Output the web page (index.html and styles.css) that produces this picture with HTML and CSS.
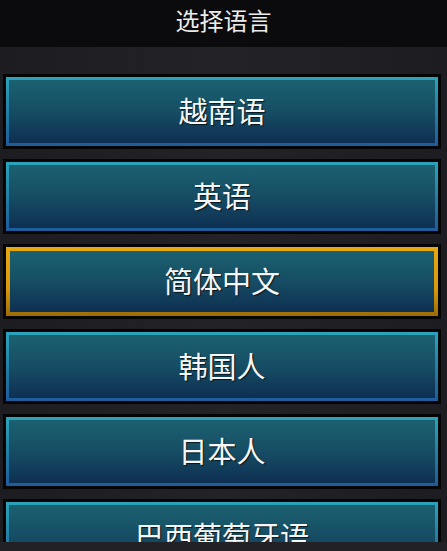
FILE: index.html
```html
<!DOCTYPE html>
<html lang="zh-CN">
<head>
<meta charset="utf-8">
<title>选择语言</title>
<link rel="stylesheet" href="styles.css">
</head>
<body>
<div class="screen">
  <header class="topbar">选择语言</header>
  <main class="list">
    <div class="item"><div class="ring"><div class="fill">越南语</div></div></div>
    <div class="item"><div class="ring"><div class="fill">英语</div></div></div>
    <div class="item selected"><div class="ring"><div class="fill">简体中文</div></div></div>
    <div class="item"><div class="ring"><div class="fill">韩国人</div></div></div>
    <div class="item"><div class="ring"><div class="fill">日本人</div></div></div>
    <div class="item"><div class="ring"><div class="fill">巴西葡萄牙语</div></div></div>
  </main>
  <footer class="bottombar"></footer>
</div>
</body>
</html>
```
FILE: styles.css
```css
html, body {
  margin: 0;
  padding: 0;
  background: #1f1e22;
}
body {
  font-family: "Noto Sans CJK SC", "Noto Sans", sans-serif;
  color: #f4f4f4;
}
.screen {
  width: 447px;
  height: 551px;
  display: flex;
  flex-direction: column;
  overflow: hidden;
}
.topbar {
  height: 47px;
  flex: 0 0 47px;
  background: #0b0b0d;
  display: flex;
  align-items: center;
  justify-content: center;
  font-size: 24px;
  line-height: 1;
  color: #ececec;
  padding-bottom: 7px;
  box-sizing: border-box;
}
.list {
  flex: 0 0 495px;
  height: 495px;
  overflow: hidden;
  padding: 27px 6px 0 3px;
  box-sizing: border-box;
  display: flex;
  flex-direction: column;
  gap: 10px;
  background: linear-gradient(90deg, #1d1c20 0%, #232226 50%, #1d1c20 100%);
}
.item {
  flex: 0 0 75px;
  height: 75px;
  box-sizing: border-box;
  padding: 3px;
  background: #050506;
}
.ring {
  height: 100%;
  box-sizing: border-box;
  padding: 3px;
  background: linear-gradient(180deg, #2ca3bd 0%, #2380a6 50%, #1d5c9c 100%);
}
.fill {
  height: 100%;
  display: flex;
  align-items: center;
  justify-content: center;
  font-size: 29px;
  line-height: 1;
  color: #f6f6f6;
  padding-bottom: 2px;
  box-sizing: border-box;
  text-shadow: 1px 1px 1px rgba(0, 0, 0, 0.7);
  background: linear-gradient(180deg, #1b6170 0%, #164d64 50%, #0e2f52 100%);
}
.selected .ring {
  padding: 4px;
  background: linear-gradient(180deg, #e8a812 0%, #d9990c 60%, #9c6c06 100%);
}
.bottombar {
  flex: 0 0 9px;
  height: 9px;
  background: #222125;
}
```
